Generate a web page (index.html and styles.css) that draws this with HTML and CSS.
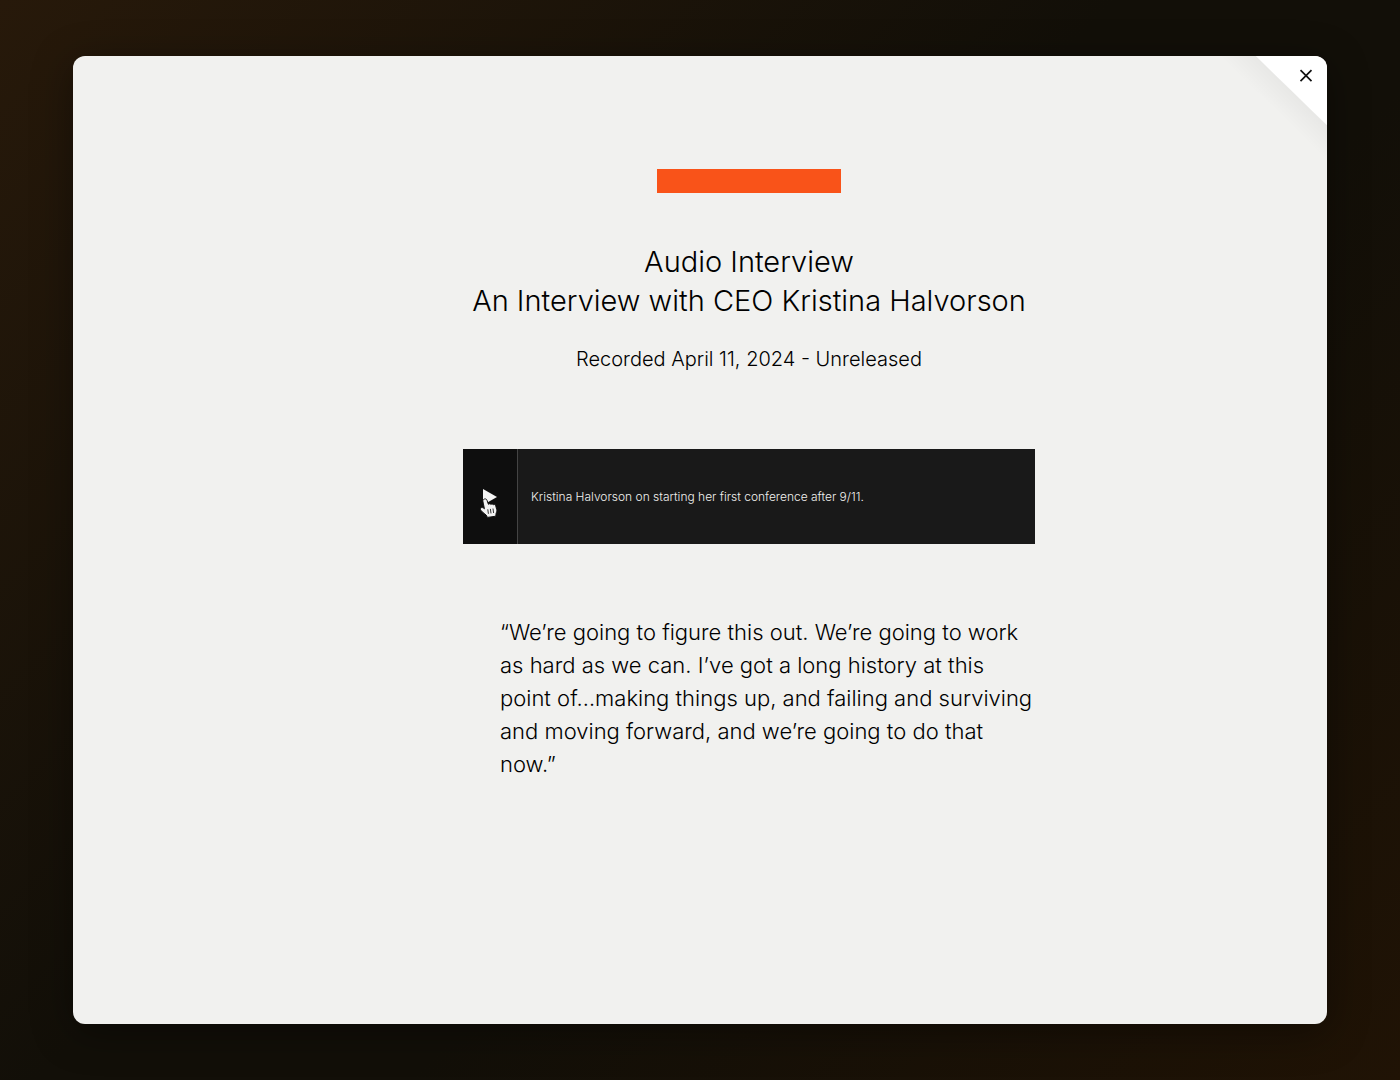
FILE: index.html
```html
<!DOCTYPE html>
<html lang="en">
<head>
  <meta charset="UTF-8">
  <meta name="viewport" content="width=device-width, initial-scale=1">
  <title>Audio Interview</title>
  <link rel="stylesheet" href="styles.css">
</head>
<body>
  <main class="panel">
    <button class="close-btn" type="button" aria-label="Close">
      <svg width="14" height="14" viewBox="0 0 14 14" aria-hidden="true">
        <path d="M1.500 1.200 12.500 12.200M12.500 1.200 1.500 12.200" fill="none" stroke="currentColor" stroke-width="1.700"/>
      </svg>
    </button>

    <article class="interview">
      <div class="accent-bar"></div>
      <h1 class="title">Audio Interview<br>An Interview with CEO Kristina Halvorson</h1>
      <p class="date">Recorded April 11, 2024 - Unreleased</p>

      <div class="player">
        <button class="play-btn" type="button" aria-label="Play">
          <svg class="play-icon" width="14" height="18" viewBox="0 0 14 18" aria-hidden="true">
            <path d="M0 1 14 9 0 17Z" fill="#f4f4f4"/>
          </svg>
          <!-- hand pointer -->
          <svg class="pointer" width="18" height="20" viewBox="0 0 18 20" aria-hidden="true">
            <path d="M4.500 1C5.700.6 6.600 1.200 7 2.300l1.400 4c.7-.8 2-.7 2.500.2.700-.8 2-.6 2.400.3.900-.6 2.100-.2 2.400.9l1 3.800c.4 1.500-.2 2.700-.6 3.800l-.3 2.900-8.300 1.200-1.400-2.400C4.200 15.600 2.200 14 .8 12.200c-.8-1-.4-2.400.8-2.600 1.100-.2 2 .4 2.800 1.200L2.900 3.200C2.700 2.200 3.300 1.400 4.500 1Z" fill="#f4f4f4" stroke="#111" stroke-width="1"/>
            <path d="M7.800 11.300l.6 4.500M10.400 10.900l.6 4.500M13 10.500l.6 4.500" fill="none" stroke="#333" stroke-width="1"/>
          </svg>
        </button>
        <p class="track">Kristina Halvorson on starting her first conference after 9/11.</p>
      </div>

      <blockquote class="quote">“We’re going to figure this out. We’re going to work as hard as we can. I’ve got a long history at this point of…making things up, and failing and surviving and moving forward, and we’re going to do that now.”</blockquote>
    </article>
  </main>
</body>
</html>
```

FILE: styles.css
```css
* {
  box-sizing: border-box;
}

body {
  display: flex;
  min-height: 100vh;
  margin: 0;
  padding: 56px 73px;
  font-family: Inter, "Liberation Sans", sans-serif;
  font-weight: 300;
  color: #000;
  background: linear-gradient(135deg, #27190a 0%, #120f08 45%, #120f08 60%, #201305 100%);
}

.panel {
  position: relative;
  flex: 1;
  display: grid;
  grid-template-columns: 390px minmax(0, 572px) 1fr;
  align-items: start;
  padding: 113px 0;
  border-radius: 12px;
  overflow: hidden;
  background: #f1f1ef;
  box-shadow: 0 8px 40px rgba(0, 0, 0, 0.4);
}

/* folded corner */
.close-btn {
  position: absolute;
  top: 0;
  right: 0;
  width: 72px;
  height: 70px;
  padding: 13px 14px;
  display: flex;
  justify-content: flex-end;
  align-items: flex-start;
  border: none;
  color: #111;
  background: linear-gradient(to top right, transparent 50%, #fff 51%);
  cursor: pointer;
}

.panel::before {
  content: "";
  position: absolute;
  top: 0;
  right: 0;
  width: 108px;
  height: 105px;
  background: linear-gradient(to top right, rgba(0, 0, 0, 0) 50%, rgba(0, 0, 0, 0.04) 67%);
}

.interview {
  grid-column: 2;
}

.accent-bar {
  width: 184px;
  height: 24px;
  margin: 0 auto;
  background: #f95319;
}

.title {
  margin: 49px 0 0;
  font-size: 29px;
  font-weight: 300;
  line-height: 39px;
  text-align: center;
}

.date {
  margin: 24px 0 0;
  font-size: 20px;
  line-height: 30px;
  text-align: center;
}

.player {
  display: flex;
  min-height: 95px;
  margin-top: 75px;
  color: #f1f1ef;
  background: #191919;
}

.play-btn {
  position: relative;
  display: flex;
  justify-content: center;
  align-items: center;
  width: 55px;
  padding: 0;
  border: none;
  border-right: 1px solid #444;
  background: #0e0e0e;
  cursor: pointer;
}

.pointer {
  position: absolute;
  top: 49px;
  left: 17px;
}

.track {
  margin: auto 13px;
  font-size: 12px;
  line-height: 20px;
}

.quote {
  margin: 72px 0 0;
  padding-left: 37px;
  font-size: 22px;
  line-height: 33px;
}
```
